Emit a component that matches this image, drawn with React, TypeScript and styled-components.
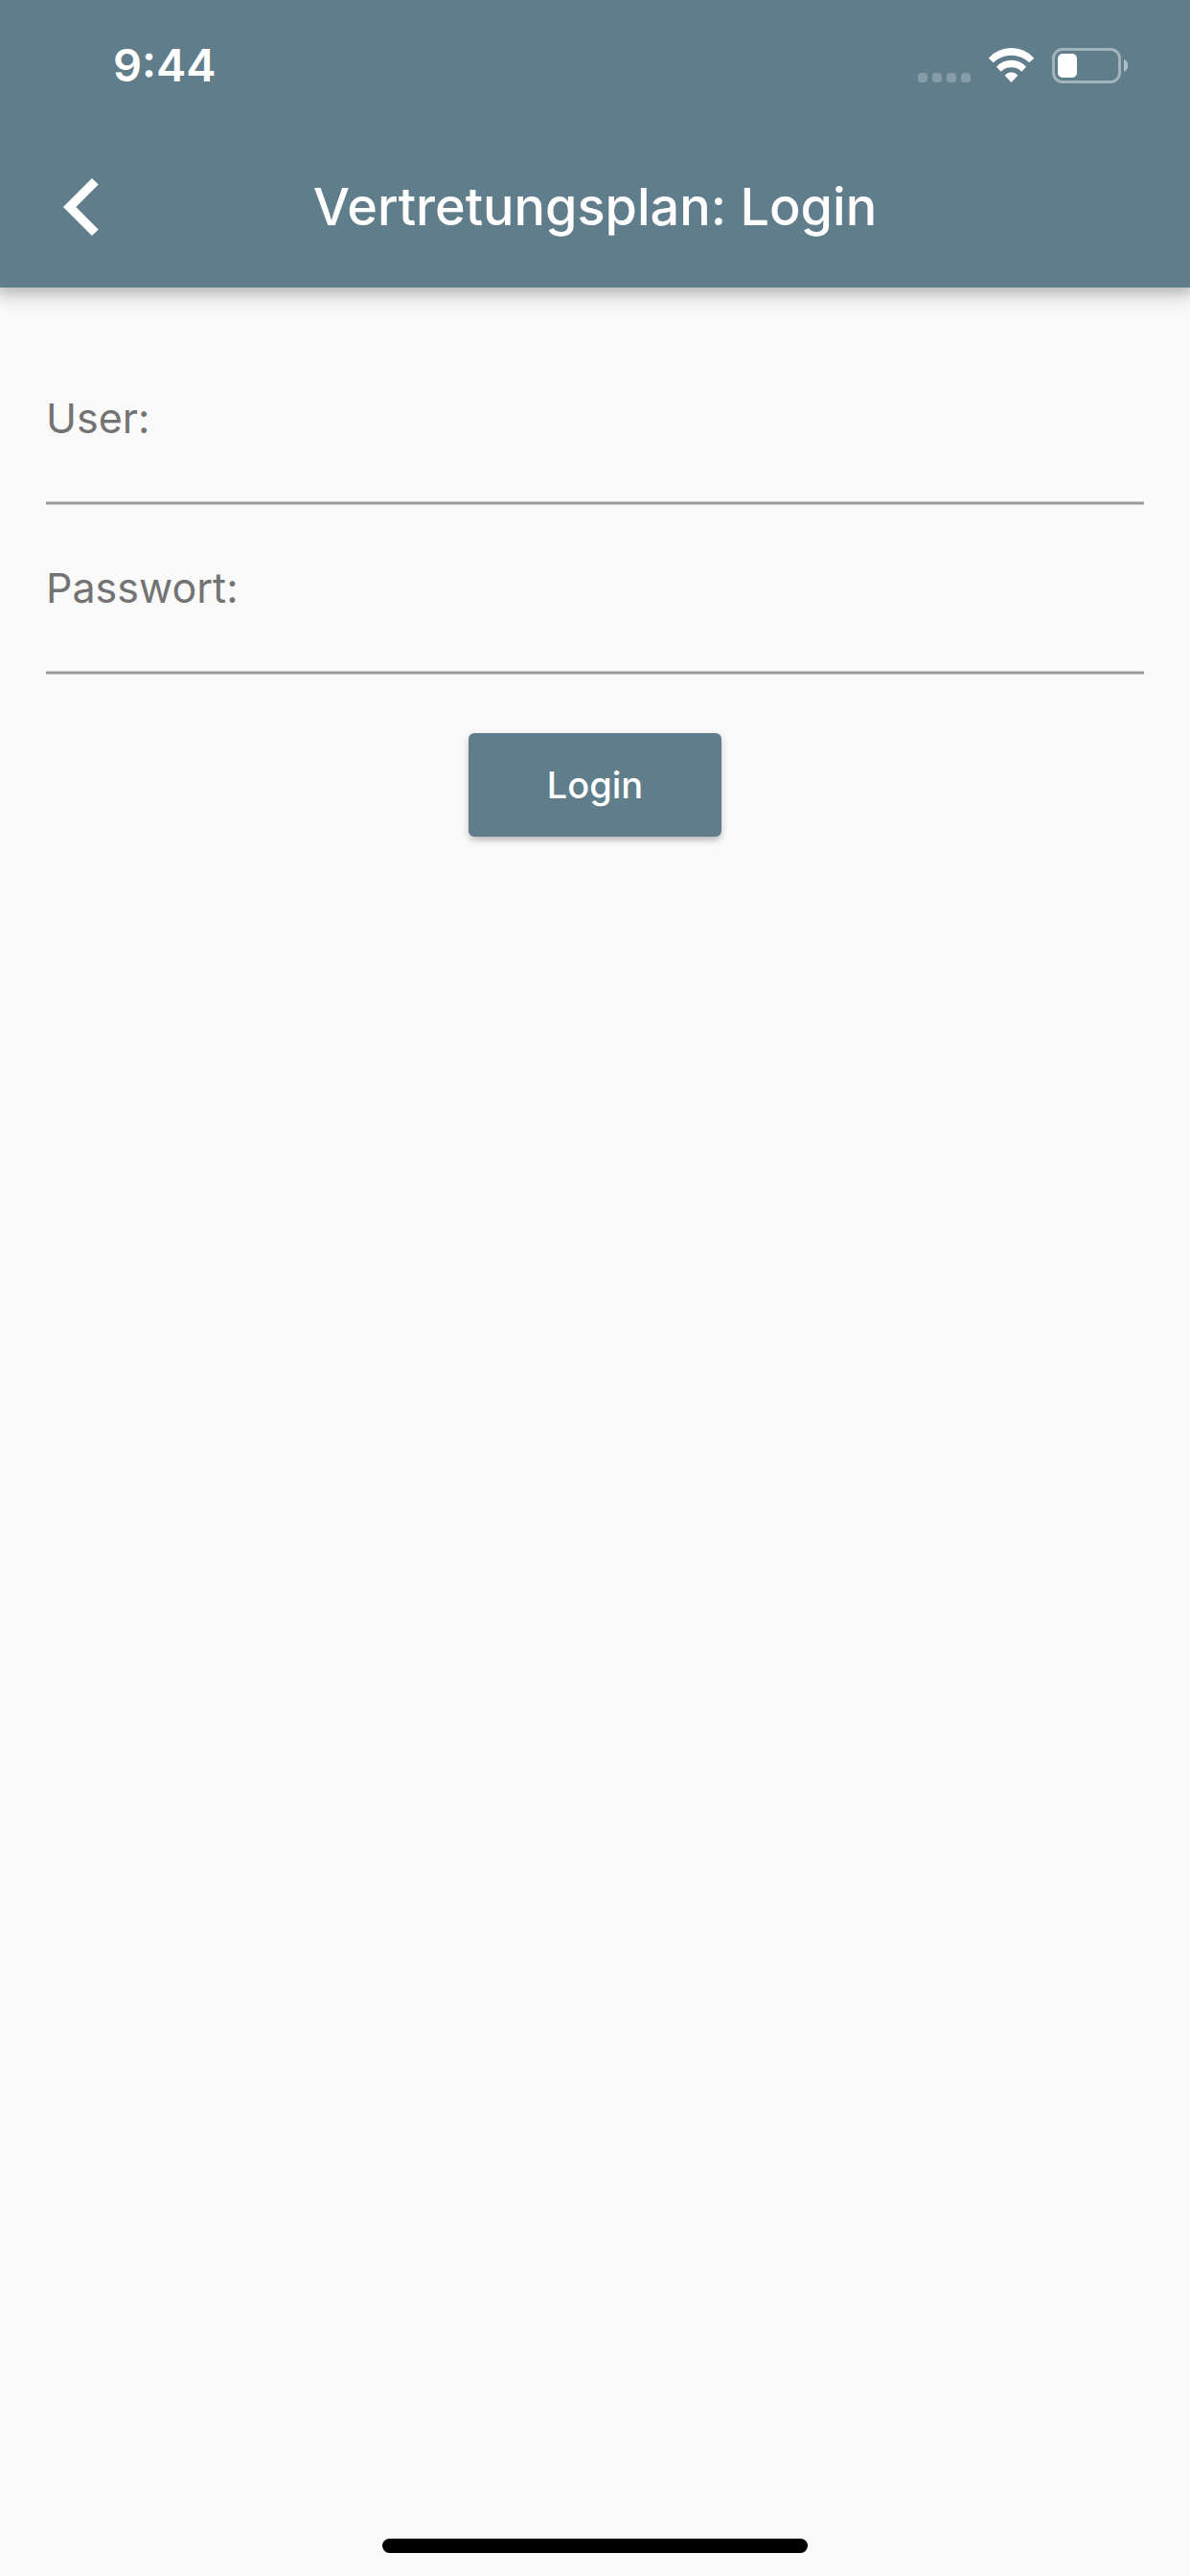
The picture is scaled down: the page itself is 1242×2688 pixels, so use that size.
import React from "react";
import styled, { createGlobalStyle } from "styled-components";

const GlobalStyle = createGlobalStyle`
  *, *::before, *::after { box-sizing: border-box; }
  body { margin: 0; background: #fafafa; }
`;

const primary = "#607d8b";
const fontStack = `Inter, "Liberation Sans", sans-serif`;

const Screen = styled.div`
  display: flex;
  flex-direction: column;
  min-height: 100vh;
  overflow-x: hidden;
  background: #fafafa;
  font-family: ${fontStack};
`;

const Header = styled.header`
  background: ${primary};
  color: #fff;
  box-shadow: 0 3px 12px 3px rgba(0, 0, 0, 0.2), 0 9px 18px 6px rgba(0, 0, 0, 0.08);
`;

const StatusBar = styled.div`
  display: flex;
  align-items: center;
  justify-content: space-between;
  height: 132px;
  padding: 4px 65px 0 118px;
`;

const Time = styled.time`
  font-size: 47px;
  line-height: 60px;
  font-weight: 600;
`;

const StatusIcons = styled.div`
  display: flex;
  align-items: flex-start;
  gap: 18px;
`;

const AppBar = styled.div`
  display: grid;
  grid-template-columns: 144px 1fr 144px;
  align-items: center;
  height: 168px;
  padding: 0 12px;
`;

const BackButton = styled.button`
  display: flex;
  align-items: center;
  justify-content: center;
  width: 144px;
  height: 144px;
  padding: 0;
  border: 0;
  background: none;
  color: inherit;
  cursor: pointer;
`;

const Title = styled.h1`
  margin: 0;
  font-size: 54px;
  line-height: 72px;
  font-weight: 500;
  text-align: center;
  white-space: nowrap;
`;

const Form = styled.form`
  display: flex;
  flex-direction: column;
  flex: 1;
  padding: 50px 48px 0;
`;

const Field = styled.div`
  display: flex;
  flex-direction: column;
  padding-top: 56px;
`;

const Label = styled.label`
  font-size: 43px;
  line-height: 60px;
  color: #737373;
`;

const Input = styled.input`
  width: 100%;
  height: 61px;
  padding: 0 0 6px;
  border: 0;
  border-bottom: 1px solid #cacaca;
  border-radius: 0;
  background: transparent;
  box-shadow: inset 0 -2px #9a9a9a, inset 0 -3px #cacaca;
  color: #212121;
  font-family: inherit;
  font-size: 43px;
  outline: 0;
`;

const SubmitButton = styled.button`
  align-self: center;
  min-width: 264px;
  height: 108px;
  margin-top: 61px;
  padding: 0 48px;
  border: 0;
  border-radius: 6px;
  background: ${primary};
  box-shadow: 0 6px 6px -3px rgba(0, 0, 0, 0.14), 0 3px 9px rgba(0, 0, 0, 0.18);
  color: #fff;
  font-family: inherit;
  font-size: 38px;
  line-height: 60px;
  font-weight: 500;
  cursor: pointer;
`;

const HomeIndicator = styled.div`
  align-self: center;
  width: 444px;
  max-width: 60%;
  height: 15px;
  margin-bottom: 24px;
  border-radius: 8px;
  background: #000;
`;

const SignalDots = () => (
  <svg width="55" height="36" viewBox="0 0 55 36" fill="#fff" fillOpacity="0.24" aria-hidden="true">
    {[0, 15, 30, 45].map((x) => (
      <rect key={x} x={x} y="26" width="10" height="10" rx="3.5" />
    ))}
  </svg>
);

const WifiIcon = () => (
  <svg width="49" height="36" viewBox="0 0 49 36" fill="#fff" aria-hidden="true">
    <path d="M.7 10.7A32 32 0 0 1 48.3 10.7L43.3 15.3A27 27 0 0 0 5.7 15.3Z" />
    <path d="M9 19.7A20.6 20.6 0 0 1 40 19.7L35.3 24.7A15.6 15.6 0 0 0 13.7 24.7Z" />
    <path d="M17.7 28.7A9 9 0 0 1 31.3 28.7L24.5 36Z" />
  </svg>
);

const BatteryIcon = () => (
  <svg width="79" height="37" viewBox="0 0 79 37" fill="none" aria-hidden="true">
    <rect x="1.5" y="1.5" width="69" height="34" rx="9.5" stroke="#fff" strokeOpacity="0.42" strokeWidth="3" />
    <path d="M75 12a7 7 0 0 1 0 13z" fill="#fff" fillOpacity="0.5" />
    <rect x="6" y="6" width="20" height="25" rx="5" fill="#fff" />
  </svg>
);

const BackIcon = () => (
  <svg width="37" height="60" viewBox="0 0 37 60" fill="currentColor" aria-hidden="true">
    <path d="M30 0L36.7 6.5L13.3 30L36.7 53.5L30 60L0 30Z" />
  </svg>
);

export default function App() {
  return (
    <>
      <GlobalStyle />
      <Screen>
        <Header>
          <StatusBar>
            <Time>9:44</Time>
            <StatusIcons>
              <SignalDots />
              <WifiIcon />
              <BatteryIcon />
            </StatusIcons>
          </StatusBar>
          <AppBar>
            <BackButton type="button" aria-label="Zurück">
              <BackIcon />
            </BackButton>
            <Title>Vertretungsplan: Login</Title>
          </AppBar>
        </Header>
        <Form onSubmit={(event: React.FormEvent) => event.preventDefault()}>
          <Field>
            <Label htmlFor="user">User:</Label>
            <Input id="user" name="user" type="text" autoComplete="username" />
          </Field>
          <Field>
            <Label htmlFor="password">Passwort:</Label>
            <Input id="password" name="password" type="password" autoComplete="current-password" />
          </Field>
          <SubmitButton type="submit">Login</SubmitButton>
        </Form>
        <HomeIndicator />
      </Screen>
    </>
  );
}
